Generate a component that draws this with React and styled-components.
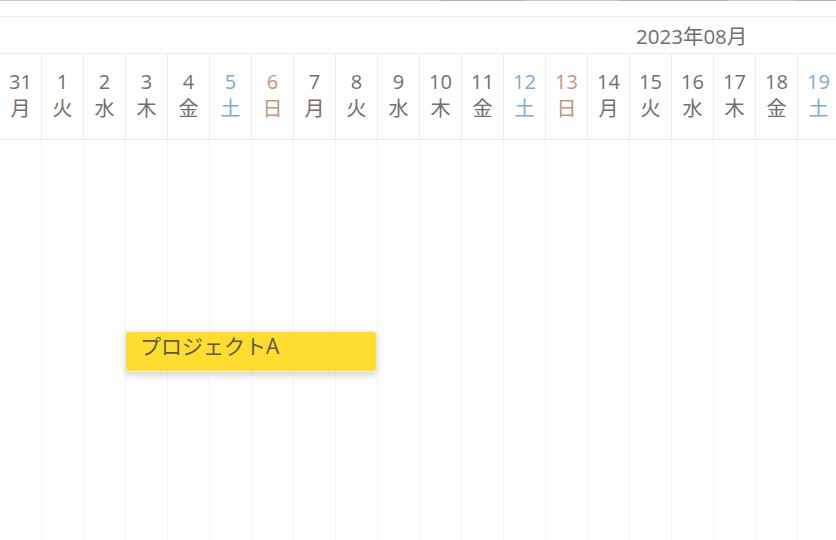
import React from "react";
import styled, { createGlobalStyle } from "styled-components";

const GlobalStyle = createGlobalStyle`
    html, body {
        margin: 0;
        padding: 0;
        background: #ffffff;
        overflow: hidden;
    }
    body {
        font-family: "Open Sans", "Noto Sans CJK JP", sans-serif;
    }
`;

const COL_W = 42;

const days = [
    { d: 31, w: "月" },
    { d: 1, w: "火" },
    { d: 2, w: "水" },
    { d: 3, w: "木" },
    { d: 4, w: "金" },
    { d: 5, w: "土" },
    { d: 6, w: "日" },
    { d: 7, w: "月" },
    { d: 8, w: "火" },
    { d: 9, w: "水" },
    { d: 10, w: "木" },
    { d: 11, w: "金" },
    { d: 12, w: "土" },
    { d: 13, w: "日" },
    { d: 14, w: "月" },
    { d: 15, w: "火" },
    { d: 16, w: "水" },
    { d: 17, w: "木" },
    { d: 18, w: "金" },
    { d: 19, w: "土" },
];

// scrollbar-ish strip along the very top edge
const topStrip = [
    { w: 441, c: "#c5c5c5" },
    { w: 83, c: "#b2afbf" },
    { w: 95, c: "#c5c5c5" },
    { w: 109, c: "#b2afbf" },
    { w: 68, c: "#c5c5c5" },
    { w: 40, c: "#b2afbf" },
];

const dayColor = (w) => {
    if (w === "土") return "#78acd5";
    if (w === "日") return "#c8937a";
    return "#6f6f6f";
};

const Page = styled.div`
    width: 836px;
    height: 540px;
    display: flex;
    flex-direction: column;
    overflow: hidden;
`;

const TopStrip = styled.div`
    display: flex;
    height: 1px;
    flex-shrink: 0;
`;

const StripPart = styled.div`
    width: ${(p) => p.$w}px;
    background: ${(p) => p.$c};
`;

const Spacer = styled.div`
    height: 15px;
    flex-shrink: 0;
    border-bottom: 1px solid #ebebeb;
`;

const MonthRow = styled.div`
    height: 36px;
    flex-shrink: 0;
    display: flex;
    align-items: center;
    padding-left: 636px;
    border-bottom: 1px solid #ebebeb;
`;

const MonthLabel = styled.span`
    font-size: 20.5px;
    line-height: 26px;
    color: #6e6e6e;
    padding-top: 1px;
`;

const DayRow = styled.div`
    height: 85px;
    flex-shrink: 0;
    display: flex;
    border-bottom: 1px solid #ebebeb;
`;

const DayCell = styled.div`
    width: ${COL_W}px;
    flex-shrink: 0;
    box-sizing: border-box;
    border-right: 1px solid #ececec;
    display: flex;
    flex-direction: column;
    align-items: center;
    padding-top: 15px;
    color: ${(p) => p.$color};
`;

const DayNum = styled.span`
    font-size: 20px;
    line-height: 26px;
    font-weight: 500;
`;

const DayName = styled.span`
    font-size: 20px;
    line-height: 28px;
`;

const Body = styled.div`
    flex: 1;
    position: relative;
    display: flex;
`;

const BodyCol = styled.div`
    width: ${COL_W}px;
    flex-shrink: 0;
    box-sizing: border-box;
    border-right: 1px solid #f4f4f4;
`;

const TaskBar = styled.div`
    position: absolute;
    left: ${(p) => p.$left}px;
    top: ${(p) => p.$top}px;
    width: ${(p) => p.$width}px;
    height: 41px;
    box-sizing: border-box;
    background: #fedd2e;
    border: 1px solid #ececec;
    border-radius: 4px;
    box-shadow: 0 3px 6px rgba(0, 0, 0, 0.18);
    display: flex;
    align-items: flex-start;
    padding: 0 0 0 14px;
`;

const TaskLabel = styled.span`
    font-size: 21px;
    line-height: 28px;
    color: #5b5846;
`;

export default function App() {
    return (
        <>
            <GlobalStyle />
            <Page>
                <TopStrip>
                    {topStrip.map((s, i) => (
                        <StripPart key={i} $w={s.w} $c={s.c} />
                    ))}
                </TopStrip>
                <Spacer />
                <MonthRow>
                    <MonthLabel>2023年08月</MonthLabel>
                </MonthRow>
                <DayRow>
                    {days.map((day) => (
                        <DayCell key={day.d} $color={dayColor(day.w)}>
                            <DayNum>{day.d}</DayNum>
                            <DayName>{day.w}</DayName>
                        </DayCell>
                    ))}
                </DayRow>
                <Body>
                    {days.map((day) => (
                        <BodyCol key={day.d} />
                    ))}
                    <TaskBar $left={125} $top={191} $width={252}>
                        <TaskLabel>プロジェクトA</TaskLabel>
                    </TaskBar>
                </Body>
            </Page>
        </>
    );
}
